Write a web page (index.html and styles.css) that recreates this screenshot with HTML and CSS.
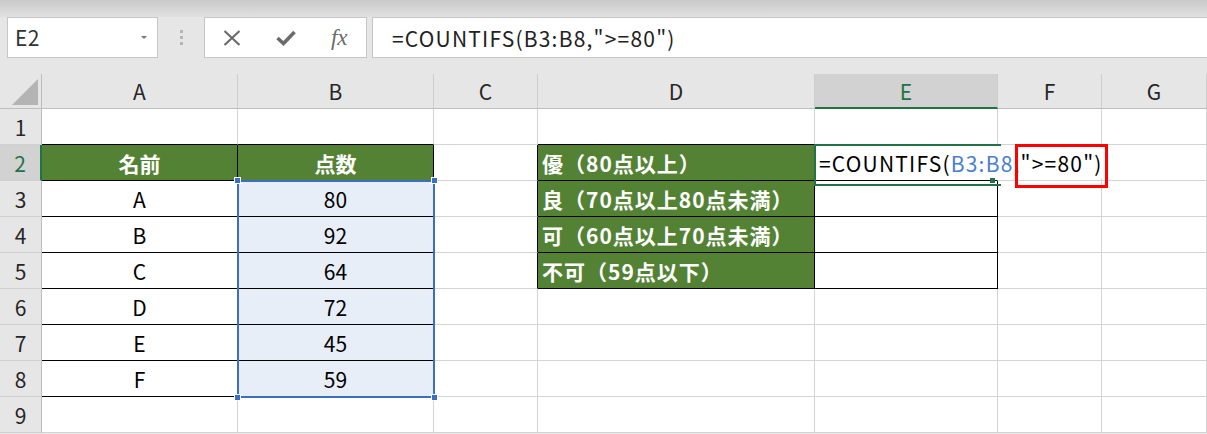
FILE: index.html
```html
<!DOCTYPE html>
<html lang="ja">
<head>
<meta charset="utf-8">
<title>COUNTIFS</title>
<link rel="stylesheet" href="styles.css">
</head>
<body>
<div class="app">
  <div class="topstrip"></div>
  <div class="fbar">
    <div class="namebox"><span class="nb-text">E2</span><span class="nb-arrow"></span></div>
    <div class="grip"><i></i><i></i><i></i></div>
    <div class="btns">
      <span class="btn"><svg width="18" height="16" viewBox="0 0 18 16"><path d="M1.5 1 L16.5 15 M16.5 1 L1.5 15" stroke="#6b6b6b" stroke-width="2.2" fill="none"/></svg></span>
      <span class="btn"><svg width="20" height="16" viewBox="0 0 20 16"><path d="M1.5 8 L7.5 13.5 L18.5 2" stroke="#6b6b6b" stroke-width="3.6" fill="none"/></svg></span>
      <span class="btn fx">fx</span>
    </div>
    <div class="formula">=COUNTIFS(B3:B8,"&gt;=80")</div>
  </div>
  <div class="sheet">
    <!-- header row -->
    <div class="corner"><svg width="42" height="35" viewBox="0 0 42 35"><polygon points="38,5 38,31 12,31" fill="#b4b4b4"/></svg></div>
    <div class="ch">A</div><div class="ch">B</div><div class="ch">C</div><div class="ch">D</div><div class="ch sel">E</div><div class="ch">F</div><div class="ch">G</div>
    <!-- row 1 -->
    <div class="rh">1</div>
    <div class="c bb"></div><div class="c bb"></div><div class="c"></div><div class="c bb"></div><div class="c bb"></div><div class="c"></div><div class="c"></div>
    <!-- row 2 -->
    <div class="rh sel">2</div>
    <div class="c t g">名前</div><div class="c t g">点数</div><div class="c br"></div>
    <div class="c t g l">優（80点以上）</div>
    <div class="c active"><span class="edit">=COUNTIFS(<span class="ref">B3:B8</span><span class="hl">,"&gt;=80")</span></span><span class="fill"></span></div>
    <div class="c"></div><div class="c"></div>
    <!-- row 3 -->
    <div class="rh">3</div>
    <div class="c t">A</div><div class="c t b rng-host">80<span class="range"><i class="h tl"></i><i class="h tr"></i><i class="h bl"></i><i class="h br2"></i></span></div><div class="c br"></div>
    <div class="c t g l">良（70点以上80点未満）</div><div class="c t"></div><div class="c"></div><div class="c"></div>
    <!-- row 4 -->
    <div class="rh">4</div>
    <div class="c t">B</div><div class="c t b">92</div><div class="c br"></div>
    <div class="c t g l">可（60点以上70点未満）</div><div class="c t"></div><div class="c"></div><div class="c"></div>
    <!-- row 5 -->
    <div class="rh">5</div>
    <div class="c t">C</div><div class="c t b">64</div><div class="c br"></div>
    <div class="c t g l">不可（59点以下）</div><div class="c t"></div><div class="c"></div><div class="c"></div>
    <!-- row 6 -->
    <div class="rh">6</div>
    <div class="c t">D</div><div class="c t b">72</div><div class="c"></div>
    <div class="c"></div><div class="c"></div><div class="c"></div><div class="c"></div>
    <!-- row 7 -->
    <div class="rh">7</div>
    <div class="c t">E</div><div class="c t b">45</div><div class="c"></div>
    <div class="c"></div><div class="c"></div><div class="c"></div><div class="c"></div>
    <!-- row 8 -->
    <div class="rh">8</div>
    <div class="c t">F</div><div class="c t b">59</div><div class="c"></div>
    <div class="c"></div><div class="c"></div><div class="c"></div><div class="c"></div>
    <!-- row 9 -->
    <div class="rh">9</div>
    <div class="c"></div><div class="c"></div><div class="c"></div>
    <div class="c"></div><div class="c"></div><div class="c"></div><div class="c"></div>
  </div>
</div>
</body>
</html>
```
FILE: styles.css
```css
* { box-sizing: border-box; }
body {
  margin: 0;
  font-family: "Noto Sans CJK JP", sans-serif;
}
.app {
  width: 1207px;
  height: 434px;
  overflow: hidden;
  background: #e6e6e6;
}
.topstrip {
  height: 17px;
  background: linear-gradient(#c9c9c9, #d3d3d3 40%, #e0e0e0);
}
.fbar {
  display: flex;
  height: 57px;
  padding-bottom: 16px;
}
.namebox {
  margin-left: 7px;
  width: 151px;
  border: 1px solid #c6c6c6;
  background: #fff;
  display: flex;
  align-items: center;
  padding-left: 7px;
}
.nb-text {
  font-size: 21px;
  color: #333;
  line-height: 1;
  letter-spacing: 0.5px;
}
.nb-arrow {
  margin-left: auto;
  margin-right: 10px;
  border-left: 3px solid transparent;
  border-right: 3px solid transparent;
  border-top: 3px solid #777;
}
.grip {
  width: 46px;
  display: flex;
  flex-direction: column;
  align-items: center;
  justify-content: center;
  gap: 3px;
}
.grip i {
  display: block;
  width: 3px;
  height: 3px;
  background: #b5b5b5;
}
.btns {
  width: 163px;
  border: 1px solid #c6c6c6;
  background: #fff;
  display: flex;
}
.btn {
  width: 54px;
  display: flex;
  align-items: center;
  justify-content: center;
}
.fx {
  font-family: "Liberation Serif", serif;
  font-style: italic;
  font-size: 23px;
  color: #6b6b6b;
  letter-spacing: 0;
}
.formula {
  margin-left: 5px;
  flex: 1;
  border: 1px solid #c6c6c6;
  border-right: none;
  background: #fff;
  padding-left: 19px;
  display: flex;
  align-items: center;
  font-size: 21px;
  color: #222;
  white-space: nowrap;
  letter-spacing: 1.2px;
}
.sheet {
  display: grid;
  grid-template-columns: 42px 196px 196px 104px 277px 183px 104px 105px;
  grid-template-rows: 35px repeat(9, 36px);
  background: #fff;
}
.corner {
  background: #e6e6e6;
  border-right: 1px solid #bdbdbd;
  border-bottom: 1px solid #bdbdbd;
}
.corner svg { display: block; }
.ch {
  background: #e6e6e6;
  border-right: 1px solid #cdcdcd;
  border-bottom: 1px solid #bdbdbd;
  display: flex;
  align-items: center;
  justify-content: center;
  font-size: 21px;
  color: #262626;
}
.ch.sel {
  background: #d2d2d2;
  color: #217346;
  border-bottom: 2px solid #217346;
}
.rh {
  background: #e6e6e6;
  border-right: 1px solid #bdbdbd;
  border-bottom: 1px solid #d0d0d0;
  display: flex;
  align-items: center;
  justify-content: center;
  font-size: 21px;
  color: #262626;
}
.rh.sel {
  background: #d2d2d2;
  color: #217346;
  border-right: 2px solid #217346;
}
.c {
  border-right: 1px solid #d4d4d4;
  border-bottom: 1px solid #d4d4d4;
  display: flex;
  align-items: center;
  justify-content: center;
  font-size: 21px;
  color: #000;
  white-space: nowrap;
}
.c.bb { border-bottom-color: #000; }
.c.br { border-right-color: #000; }
.c.t {
  border-right-color: #000;
  border-bottom-color: #000;
}
.c.g {
  background: #548235;
  color: #fff;
  font-weight: bold;
}
.c.l {
  justify-content: flex-start;
  padding-left: 4px;
  letter-spacing: 1px;
}
.c.b { background: #e8eef8; }
.rng-host { position: relative; }
.range {
  position: absolute;
  left: -1px;
  top: -1px;
  width: 198px;
  height: 218px;
  border: 2px solid #3b6fc4;
  z-index: 3;
}
.h {
  position: absolute;
  width: 7px;
  height: 7px;
  background: #3b6fc4;
  border: 1px solid #fff;
}
.h.tl { left: -5px; top: -5px; }
.h.tr { right: -5px; top: -5px; }
.h.bl { left: -5px; bottom: -5px; }
.h.br2 { right: -5px; bottom: -5px; }
.c.active {
  position: relative;
  z-index: 4;
  justify-content: flex-start;
  padding-left: 4px;
  border-right-color: transparent;
  border-bottom-color: #000;
}
.c.active::after {
  content: "";
  position: absolute;
  left: -1px;
  top: -1px;
  width: 185px;
  height: 38px;
  border: 2px solid #217346;
  border-right: none;
  pointer-events: none;
}
.edit {
  background: #fff;
  position: relative;
  z-index: 1;
  letter-spacing: 1.2px;
}
.ref { color: #4a7ed0; }
.hl {
  position: relative;
}
.hl::after {
  content: "";
  position: absolute;
  left: 1px;
  right: -5px;
  top: 50%;
  height: 38px;
  margin-top: -19px;
  border: 3px solid #ff0000;
}
.fill {
  position: absolute;
  right: 2px;
  bottom: -3px;
  width: 5px;
  height: 5px;
  background: #217346;
}
```
